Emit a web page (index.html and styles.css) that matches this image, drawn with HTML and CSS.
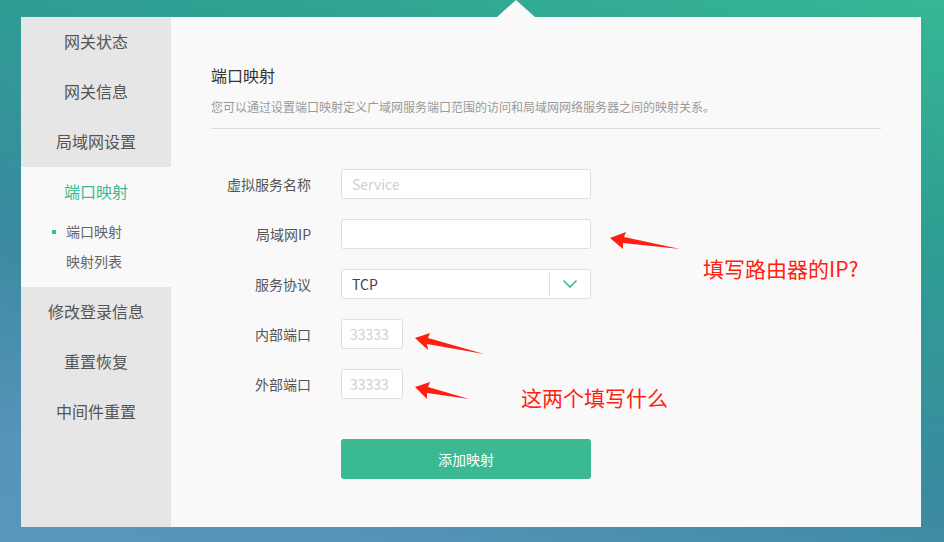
FILE: index.html
```html
<!DOCTYPE html>
<html lang="zh-CN">

<head>
    <meta charset="UTF-8">
    <meta name="viewport" content="width=device-width, initial-scale=1.0">
    <title>端口映射</title>
    <link rel="stylesheet" href="styles.css">
</head>

<body>
    <div class="page">
        <div class="panel">
            <!-- Sidebar menu -->
            <div class="sidebar">
                <div class="menu-item">网关状态</div>
                <div class="menu-item">网关信息</div>
                <div class="menu-item">局域网设置</div>
                <div class="menu-group">
                    <div class="menu-item active">端口映射</div>
                    <div class="sub-item current">端口映射</div>
                    <div class="sub-item">映射列表</div>
                </div>
                <div class="menu-item">修改登录信息</div>
                <div class="menu-item">重置恢复</div>
                <div class="menu-item">中间件重置</div>
            </div>

            <!-- Main content -->
            <div class="content">
                <h2 class="title">端口映射</h2>
                <p class="desc">您可以通过设置端口映射定义广域网服务端口范围的访问和局域网网络服务器之间的映射关系。</p>

                <div class="form">
                    <div class="row">
                        <label class="label">虚拟服务名称</label>
                        <input class="input" type="text" placeholder="Service">
                    </div>
                    <div class="row">
                        <label class="label">局域网IP</label>
                        <input class="input" type="text">
                    </div>
                    <div class="row">
                        <label class="label">服务协议</label>
                        <div class="select">
                            <span class="select-value">TCP</span>
                            <span class="select-arrow">
                                <svg width="16" height="10" viewBox="0 0 16 10">
                                    <path d="M1.5 1.5 L8 8 L14.5 1.5" fill="none" stroke="#3bb993" stroke-width="1.6"/>
                                </svg>
                            </span>
                        </div>
                    </div>
                    <div class="row">
                        <label class="label">内部端口</label>
                        <input class="input small" type="text" placeholder="33333">
                    </div>
                    <div class="row">
                        <label class="label">外部端口</label>
                        <input class="input small" type="text" placeholder="33333">
                    </div>
                    <div class="row submit-row">
                        <span class="label"></span>
                        <button class="btn">添加映射</button>
                    </div>
                </div>
            </div>
        </div>

        <!-- red annotations drawn on top of the screenshot -->
        <svg class="marks" width="944" height="542" viewBox="0 0 944 542">
            <polygon points="610,238 626,232 624,237 680,249 623,243 623,249" fill="#ff1e0f"/>
            <polygon points="415,338 430,333 428,338 484,354 427,344 428,350" fill="#ff1e0f"/>
            <polygon points="415,387 430,382 428,387 469,399 427,393 427,399" fill="#ff1e0f"/>
        </svg>
        <div class="note note-ip">填写路由器的IP?</div>
        <div class="note note-port">这两个填写什么</div>
    </div>
</body>

</html>
```

FILE: styles.css
```css
html,
body {
    margin: 0;
    padding: 0;
}

body {
    font-family: "Noto Sans CJK SC", "Noto Sans", sans-serif;
    width: 944px;
    height: 542px;
    overflow: hidden;
    background: linear-gradient(196deg, #36b795 0%, #2e9e92 30%, #3a8aa0 62%, #5593b8 85%, #5b97bd 100%);
}

.page {
    position: relative;
    width: 944px;
    height: 542px;
    padding: 17px 23px 15px 21px;
    box-sizing: border-box;
}

.panel {
    position: relative;
    display: flex;
    height: 510px;
    background: #f9f9f9;
}

/* notch above the panel */
.panel::before {
    content: "";
    position: absolute;
    top: -17px;
    left: 476px;
    border-left: 19px solid transparent;
    border-right: 19px solid transparent;
    border-bottom: 17px solid #f9f9f9;
}

.sidebar {
    width: 150px;
    flex-shrink: 0;
    background: #e6e6e6;
}

.menu-item {
    height: 50px;
    line-height: 48px;
    text-align: center;
    font-size: 16px;
    color: #555;
}

.menu-group {
    background: #f9f9f9;
    padding-bottom: 10px;
}

.menu-item.active {
    color: #3bb993;
}

.sub-item {
    height: 30px;
    line-height: 29px;
    padding-left: 45px;
    font-size: 14px;
    color: #666;
    position: relative;
}

.sub-item.current::before {
    content: "";
    position: absolute;
    left: 31px;
    top: 13px;
    width: 4px;
    height: 4px;
    background: #3bb993;
}

.content {
    flex: 1;
    padding: 46px 40px 0 40px;
}

.title {
    margin: 0;
    font-size: 16px;
    font-weight: normal;
    color: #333;
    line-height: 24px;
}

.desc {
    margin: 11px 0 0;
    font-size: 12px;
    color: #999;
    line-height: 18px;
    padding-bottom: 12px;
    border-bottom: 1px solid #dcdcdc;
}

.form {
    padding-top: 40px;
}

.row {
    display: flex;
    align-items: center;
    gap: 30px;
    margin-bottom: 20px;
}

.label {
    width: 100px;
    text-align: right;
    font-size: 14px;
    color: #555;
}

.input {
    width: 250px;
    height: 30px;
    box-sizing: border-box;
    border: 1px solid #dedede;
    border-radius: 3px;
    background: #fff;
    padding: 0 10px;
    font-family: inherit;
    font-size: 14px;
    outline: none;
}

.input::placeholder {
    color: #cfcfcf;
}

.input.small {
    width: 62px;
    padding: 0 8px;
}

.select {
    width: 250px;
    height: 30px;
    box-sizing: border-box;
    border: 1px solid #dedede;
    border-radius: 3px;
    background: #fff;
    display: flex;
    align-items: center;
}

.select-value {
    flex: 1;
    padding-left: 10px;
    font-size: 14px;
    color: #444;
}

.select-arrow {
    width: 40px;
    height: 23px;
    border-left: 1px solid #dedede;
    display: flex;
    align-items: center;
    justify-content: center;
}

.submit-row {
    margin-top: 40px;
}

.btn {
    width: 250px;
    height: 40px;
    border: none;
    border-radius: 3px;
    background: #3bb993;
    color: #fff;
    font-family: inherit;
    font-size: 14px;
    cursor: pointer;
}

.marks {
    position: absolute;
    left: 0;
    top: 0;
    pointer-events: none;
}

.note {
    position: absolute;
    font-size: 21px;
    color: #ff2010;
    line-height: 28px;
    white-space: nowrap;
}

.note-ip {
    left: 703px;
    top: 254px;
}

.note-port {
    left: 521px;
    top: 383px;
}
```
